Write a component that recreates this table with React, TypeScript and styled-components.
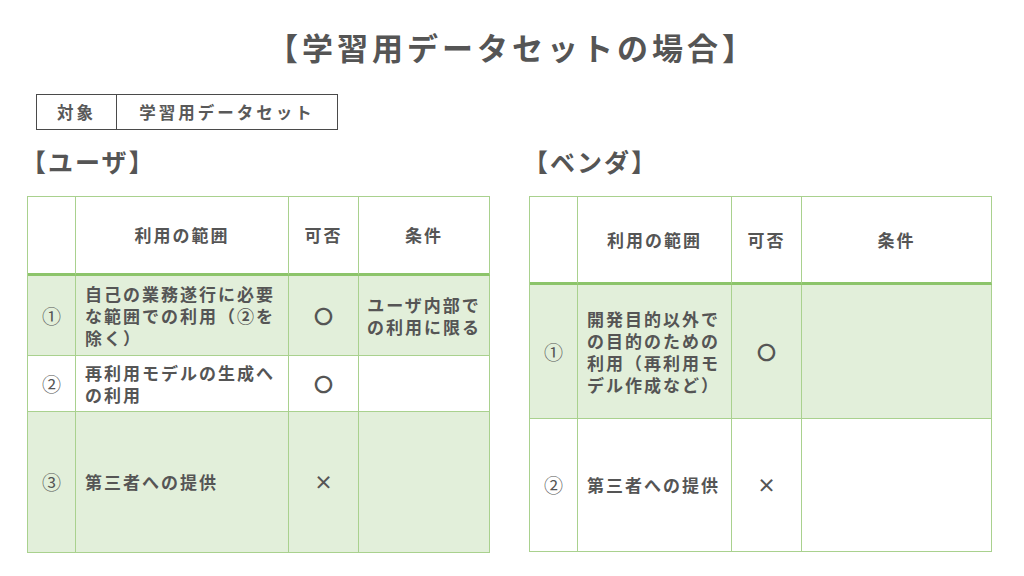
import React from 'react';
import styled, { createGlobalStyle } from 'styled-components';

const GlobalStyle = createGlobalStyle`
  html, body {
    margin: 0;
    padding: 0;
    background: #ffffff;
  }
  body {
    font-family: "Noto Sans CJK JP", "Noto Sans", sans-serif;
    color: #595959;
  }
`;

const Page = styled.div`
  width: 1024px;
  height: 576px;
  box-sizing: border-box;
  padding-top: 28px;
  overflow: hidden;
`;

const Title = styled.h1`
  margin: 0;
  text-align: center;
  font-size: 31px;
  line-height: 37px;
  font-weight: 700;
  letter-spacing: 4px;
  color: #555555;
`;

const TargetBox = styled.div`
  margin: 29px 0 0 36px;
  width: 302px;
  height: 36px;
  box-sizing: border-box;
  border: 1px solid #4a4a4a;
  display: grid;
  grid-template-columns: 80px 1fr;
`;

const TargetCell = styled.div<{ $divider?: boolean }>`
  display: flex;
  align-items: center;
  justify-content: center;
  font-size: 16.5px;
  font-weight: 700;
  letter-spacing: 3px;
  border-right: ${(p) => (p.$divider ? '1px solid #4a4a4a' : 'none')};
`;

const Panels = styled.div`
  display: flex;
  margin-top: 16px;
  padding-left: 27px;
  gap: 39px;
`;

const Panel = styled.section`
  display: flex;
  flex-direction: column;
`;

const Heading = styled.h2`
  margin: 0 0 20px -6px;
  font-size: 25px;
  line-height: 30px;
  font-weight: 700;
  letter-spacing: 2px;
  color: #555555;
`;

const Grid = styled.div<{ $cols: string; $rows: string }>`
  display: grid;
  grid-template-columns: ${(p) => p.$cols};
  grid-template-rows: ${(p) => p.$rows};
  border-left: 1px solid #a9d18e;
  border-top: 1px solid #a9d18e;
  width: fit-content;
`;

const Cell = styled.div<{ $green?: boolean; $head?: boolean; $align?: 'left' | 'center' }>`
  box-sizing: border-box;
  display: flex;
  align-items: center;
  justify-content: ${(p) => (p.$align === 'left' ? 'flex-start' : 'center')};
  text-align: ${(p) => (p.$align === 'left' ? 'left' : 'center')};
  padding: ${(p) => (p.$align === 'left' ? '0 0 0 9px' : '0')};
  background: ${(p) => (p.$green ? '#e2efda' : '#ffffff')};
  border-right: 1px solid #a9d18e;
  border-bottom: ${(p) => (p.$head ? '3px solid #8cc46a' : '1px solid #a9d18e')};
  font-size: 17px;
  line-height: 22px;
  font-weight: 700;
  letter-spacing: 2px;
  color: #555555;
`;

const Num = styled.span`
  font-size: 19px;
  font-weight: 400;
  letter-spacing: 0;
`;

const Mark = styled.span`
  font-size: 19px;
  font-weight: 700;
  letter-spacing: 0;
`;

type Row = {
  no: string;
  scope: React.ReactNode;
  ok: string;
  cond?: React.ReactNode;
};

const userRows: Row[] = [
  {
    no: '①',
    scope: (<>自己の業務遂行に必要<br />な範囲での利用（②を<br />除く）</>),
    ok: '〇',
    cond: (<>ユーザ内部で<br />の利用に限る</>),
  },
  { no: '②', scope: (<>再利用モデルの生成へ<br />の利用</>), ok: '〇' },
  { no: '③', scope: '第三者への提供', ok: '×' },
];

const vendorRows: Row[] = [
  {
    no: '①',
    scope: (<>開発目的以外で<br />の目的のための<br />利用（再利用モ<br />デル作成など）</>),
    ok: '〇',
  },
  { no: '②', scope: '第三者への提供', ok: '×' },
];

const UsageTable = ({ rows, cols, heights, greenRows }: { rows: Row[]; cols: string; heights: string; greenRows: number[] }) => (
  <Grid $cols={cols} $rows={heights}>
    <Cell $head />
    <Cell $head>利用の範囲</Cell>
    <Cell $head>可否</Cell>
    <Cell $head>条件</Cell>
    {rows.map((r, i) => {
      const green = greenRows.includes(i);
      return (
        <React.Fragment key={r.no}>
          <Cell $green={green}><Num>{r.no}</Num></Cell>
          <Cell $green={green} $align="left">{r.scope}</Cell>
          <Cell $green={green}><Mark>{r.ok}</Mark></Cell>
          <Cell $green={green}>{r.cond}</Cell>
        </React.Fragment>
      );
    })}
  </Grid>
);

const App = () => {
  return (
    <Page>
      <GlobalStyle />
      <Title>【学習用データセットの場合】</Title>
      <TargetBox>
        <TargetCell $divider>対象</TargetCell>
        <TargetCell>学習用データセット</TargetCell>
      </TargetBox>
      <Panels>
        <Panel>
          <Heading>【ユーザ】</Heading>
          <UsageTable
            rows={userRows}
            cols="48px 213px 70px 131px"
            heights="79px 80px 56px 141px"
            greenRows={[0, 2]}
          />
        </Panel>
        <Panel>
          <Heading>【ベンダ】</Heading>
          <UsageTable
            rows={vendorRows}
            cols="48px 154px 70px 190px"
            heights="88px 134px 133px"
            greenRows={[0]}
          />
        </Panel>
      </Panels>
    </Page>
  );
};

export default App;
